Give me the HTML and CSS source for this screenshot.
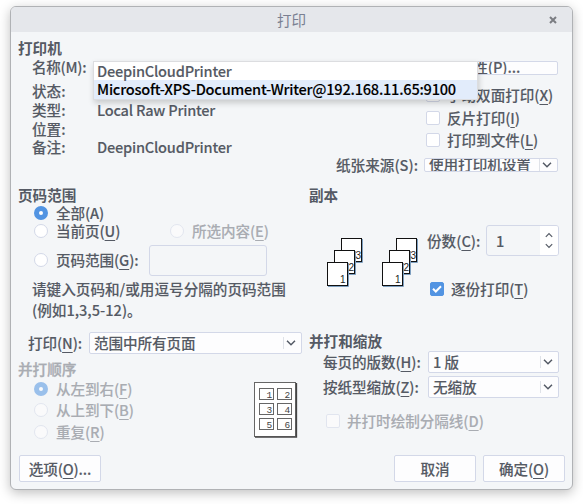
FILE: index.html
```html
<!DOCTYPE html>
<html lang="zh-CN">
<head>
<meta charset="utf-8">
<title>打印</title>
<link rel="stylesheet" href="styles.css">
</head>
<body>
<svg class="defs" width="0" height="0" aria-hidden="true">
  <symbol id="chev" viewBox="0 0 10 7"><path d="M1 1.2 5 5.2 9 1.2" fill="none" stroke="#555b66" stroke-width="1.5"/></symbol>
</svg>
<main class="dialog">
  <header class="titlebar"><span>打印</span>
    <svg class="close" width="8" height="8" viewBox="0 0 8 8"><path d="M1 1 7 7M7 1 1 7" stroke="#7b7d82" stroke-width="2"/></svg>
  </header>
  <section class="printer">
    <div class="info">
      <h2>打印机</h2>
      <dl>
        <dt class="name">名称(M):</dt><dd></dd>
        <dt>状态:</dt><dd></dd>
        <dt>类型:</dt><dd class="latin">Local Raw Printer</dd>
        <dt>位置:</dt><dd></dd>
        <dt>备注:</dt><dd class="latin">DeepinCloudPrinter</dd>
      </dl>
    </div>
    <div class="props">
      <button class="prop-btn"><span>属性(P)...</span></button>
      <label class="check"><i class="box"></i>手动双面打印(<u>X</u>)</label>
      <label class="check"><i class="box"></i>反片打印(<u>I</u>)</label>
      <label class="check"><i class="box"></i>打印到文件(<u>L</u>)</label>
      <div class="source"><span>纸张来源(S):</span><div class="combo short"><span>使用打印机设置</span><svg width="10" height="12"><use href="#chev"/></svg></div></div>
    </div>
    <ul class="popup latin"><li>DeepinCloudPrinter</li><li class="active">Microsoft-XPS-Document-Writer@192.168.11.65:9100</li></ul>
  </section>
  <section class="columns">
    <div class="left">
      <h2>页码范围</h2>
      <div class="radios">
        <label class="radio all"><i class="dot on"></i>全部(A)</label>
        <div class="pair"><label class="radio"><i class="dot"></i>当前页(<u>U</u>)</label><label class="radio off"><i class="dot"></i>所选内容(<u>E</u>)</label></div>
        <div class="range"><label class="radio"><i class="dot"></i>页码范围(<u>G</u>):</label><span class="field"></span></div>
      </div>
      <p class="hint">请键入页码和/或用逗号分隔的页码范围<br>(例如1,3,5-12)。</p>
      <div class="print-row"><span>打印(<u>N</u>):</span><div class="combo"><span>范围中所有页面</span><svg width="10" height="12"><use href="#chev"/></svg></div></div>
      <h2 class="off">并打顺序</h2>
      <div class="order">
        <div class="order-list off">
          <label class="radio"><i class="dot on"></i>从左到右(<u>F</u>)</label>
          <label class="radio"><i class="dot"></i>从上到下(<u>B</u>)</label>
          <label class="radio"><i class="dot"></i>重复(<u>R</u>)</label>
        </div>
        <svg class="sheet" width="44" height="56" viewBox="0 0 44 56">
          <rect x=".5" y=".5" width="41" height="54" fill="#fff" stroke="#666"/>
          <path d="M1 55.200H42.500V1" fill="none" stroke="#444" stroke-width="1.300"/>
          <g fill="#fff" stroke="#666"><rect x="5.500" y="6.500" width="14" height="11"/><rect x="23.500" y="6.500" width="14" height="11"/><rect x="5.500" y="21.500" width="14" height="11"/><rect x="23.500" y="21.500" width="14" height="11"/><rect x="5.500" y="36.500" width="14" height="11"/><rect x="23.500" y="36.500" width="14" height="11"/></g>
          <g class="cells"><text x="12.500" y="15.500">1</text><text x="30.500" y="15.500">2</text><text x="12.500" y="30.500">3</text><text x="30.500" y="30.500">4</text><text x="12.500" y="45.500">5</text><text x="30.500" y="45.500">6</text></g>
        </svg>
      </div>
    </div>
    <div class="right">
      <h2>副本</h2>
      <div class="copies">
        <svg class="stack" width="36" height="49" viewBox="0 0 36 49">
          <path d="M15 24.500H35.500V1M8 36.500H28.500V13M1 48.500H21.500V25" fill="none" stroke="#7d9fc0"/>
          <g fill="#fff" stroke="#111"><rect x="14.500" y=".5" width="20" height="23"/><path d="M28.500 13V36.500" stroke="#7d9fc0"/><rect x="7.500" y="12.500" width="20" height="23"/><path d="M21.500 25V48" stroke="#7d9fc0"/><rect x=".5" y="24.500" width="20" height="23"/></g>
          <g class="digits"><text x="28.500" y="20.500">3</text><text x="21.500" y="32.500">2</text><text x="13" y="44.500">1</text></g>
        </svg>
        <svg class="stack" width="36" height="49" viewBox="0 0 36 49">
          <path d="M15 24.500H35.500V1M8 36.500H28.500V13M1 48.500H21.500V25" fill="none" stroke="#7d9fc0"/>
          <g fill="#fff" stroke="#111"><rect x="14.500" y=".5" width="20" height="23"/><path d="M28.500 13V36.500" stroke="#7d9fc0"/><rect x="7.500" y="12.500" width="20" height="23"/><path d="M21.500 25V48" stroke="#7d9fc0"/><rect x=".5" y="24.500" width="20" height="23"/></g>
          <g class="digits"><text x="28.500" y="20.500">3</text><text x="21.500" y="32.500">2</text><text x="13" y="44.500">1</text></g>
        </svg>
        <div class="copy-opts">
          <div class="count"><span>份数(<u>C</u>):</span><div class="spin"><span>1</span><div class="arrows"><svg class="up" width="8" height="6"><use href="#chev"/></svg><svg width="8" height="6"><use href="#chev"/></svg></div></div></div>
          <label class="check collate"><i class="box on"><svg width="10" height="8" viewBox="0 0 10 8"><path d="M1 3.700 3.800 6.500 9 1.200" fill="none" stroke="#fff" stroke-width="2"/></svg></i>逐份打印(<u>T</u>)</label>
        </div>
      </div>
      <h2>并打和缩放</h2>
      <div class="scale"><span>每页的版数(<u>H</u>):</span><div class="combo"><span>1 版</span><svg width="10" height="12"><use href="#chev"/></svg></div></div>
      <div class="scale"><span>按纸型缩放(<u>Z</u>):</span><div class="combo"><span>无缩放</span><svg width="10" height="12"><use href="#chev"/></svg></div></div>
      <label class="check line off"><i class="box"></i>并打时绘制分隔线(<u>D</u>)</label>
    </div>
  </section>
  <footer><button class="options">选项(<u>O</u>)...</button><button>取消</button><button>确定(<u>O</u>)</button></footer>
</main>
</body>
</html>
```

FILE: styles.css
```css
* { box-sizing: border-box; }
body { margin: 0; padding: 6px 10px; width: 583px; height: 504px; overflow: hidden; background: #fff; color: #555a64; font: 500 14.6px/18px "Noto Sans CJK SC", sans-serif; -webkit-text-stroke: .1px; }
.defs { display: block; height: 0; }
h2, p, dl, dd, ul { margin: 0; padding: 0; }
h2 { font-size: 14.6px; line-height: 18px; height: 18px; font-weight: 700; -webkit-text-stroke: 0; }
h2.off { font-weight: 500; -webkit-text-stroke: .3px; }
u { text-decoration: underline; text-decoration-thickness: 1px; text-underline-offset: 3px; }
.latin { letter-spacing: -.235px; }
.dialog { width: 563px; height: 484px; border: 1px solid #b0b2b5; border-radius: 6px; background: #f4f6f8; box-shadow: 0 3px 12px rgba(0,0,0,.25); display: flex; flex-direction: column; }
.titlebar { height: 25px; flex: none; background: #e5e7eb; border-radius: 5px 5px 0 0; display: grid; grid-template-columns: 1fr auto 1fr; align-items: center; color: #7a8092; font-weight: 400; -webkit-text-stroke: 0; }
.titlebar span { grid-column: 2; }
.close { justify-self: end; margin-right: 15px; }
.off { color: #a9acb2; }
.printer { position: relative; display: flex; height: 154px; padding: 7px 14px 0 7px; }
.info { width: 319px; }
dl { display: grid; grid-template-columns: 65px 1fr; grid-template-rows: 24px 19px 19px 18px 18px; margin: 1px 0 0 14px; }
dt, dd { line-height: 18px; white-space: nowrap; }
.name { letter-spacing: -.3px; }
.props { flex: 1; padding-top: 22px; display: flex; flex-direction: column; }
button { font: inherit; color: inherit; background: #fdfdfe; border: 1px solid #d3d8e8; border-radius: 2px; padding: 0; }
.prop-btn { align-self: flex-end; width: 131px; height: 14px; overflow: hidden; line-height: 12px; margin-bottom: 9px; display: flex; align-items: center; justify-content: center; }
.prop-btn span { margin: -2px 0 0 -6px; letter-spacing: -.1px; }
.check { display: flex; align-items: center; height: 22.500px; white-space: nowrap; letter-spacing: -.05px; }
.box { width: 14px; height: 14px; border: 1px solid #d3d8e8; border-radius: 2px; background: #fff; margin-right: 7px; display: flex; align-items: center; justify-content: center; flex: none; }
.box.on { background: #5294e2; border-color: #5294e2; }
.props .check { margin-left: 90px; }
.props .check { position: static; }
.source { display: flex; align-items: center; justify-content: flex-end; height: 14px; margin-top: 6px; white-space: nowrap; }
.source > span { margin-right: 6px; }
.combo { height: 22px; border: 1px solid #d3d8e8; border-radius: 2px; background: #fdfdfe; display: flex; align-items: center; justify-content: space-between; padding: 0 5px 0 4px; overflow: hidden; white-space: nowrap; }
.combo svg { box-sizing: content-box; padding-left: 2px; border-left: 1px solid #dfe2e8; flex: none; }
.short { width: 134px; height: 14px; }
.short span { margin-top: -2px; letter-spacing: -.05px; }
.popup { position: absolute; left: 82px; top: 29px; width: 385px; height: 39px; border: 1px solid #dcdde0; list-style: none; background: #fff; box-shadow: 1px 3px 6px rgba(0,0,0,.18); }
.popup li { height: 18px; line-height: 18px; padding-left: 3px; white-space: nowrap; }
.popup .active { height: 19px; background: #e2ecfb; color: #000; }
.columns { display: grid; grid-template-columns: 291px 1fr; height: 262px; }
.left { padding-left: 7px; }
.radios { padding-left: 16px; }
.radio { display: flex; align-items: center; height: 18px; white-space: nowrap; letter-spacing: -.1px; }
.dot { width: 14px; height: 14px; border: 1px solid #d3d8e8; border-radius: 50%; background: #fff; margin-right: 8px; flex: none; }
.dot.on { border: 5px solid #5294e2; }
.off .dot, .off .box { opacity: .55; }
.pair { display: grid; grid-template-columns: 136px 1fr; }
.range { display: grid; grid-template-columns: 115px 118px; align-items: center; height: 31px; margin-top: 5px; }
.range .radio { margin-top: -2px; }
.field { height: 31px; border: 1px solid #d3d8e8; border-radius: 3px; }
.hint { line-height: 21px; padding: 2px 0 0 14px; white-space: nowrap; }
.print-row { display: grid; grid-template-columns: 61px 213px; padding-left: 10px; margin: 12px 0 6px; align-items: center; letter-spacing: -.1px; }
.order { display: flex; justify-content: space-between; padding: 0 4px 0 16px; }
.order-list { display: grid; grid-auto-rows: 21.500px; align-content: start; align-items: center; }
.sheet { margin-top: 4px; }
.right { padding-left: 7px; }
.copies { display: flex; height: 128px; padding: 21px 0 0 18px; }
.stack { margin: 13px 19px 0 0; flex: none; }
.copy-opts { margin-left: -10px; }
.count { display: grid; grid-template-columns: 59px 73px; align-items: center; white-space: nowrap; }
.spin { height: 31px; border: 1px solid #d3d8e8; border-radius: 3px; display: flex; align-items: center; justify-content: space-between; padding-left: 9px; }
.arrows { height: 29px; width: 18px; background: #fff; border-radius: 0 2px 2px 0; display: flex; flex-direction: column; align-items: center; justify-content: space-evenly; }
.up { transform: rotate(180deg); }
.collate { margin: 22px 0 0 3px; }
.scale { display: grid; grid-template-columns: 105px 131px; align-items: center; height: 22px; margin: 1px 0 3px 14px; white-space: nowrap; letter-spacing: -.1px; }
.line { margin: 12px 0 0 17px; }
footer { display: flex; padding: 7px 7px 0 8px; }
footer button { width: 82px; height: 27px; margin-left: 7px; line-height: 22px; letter-spacing: -.15px; }
footer .options { margin: 0 auto 0 0; }
text { fill: #222; font-family: "Liberation Sans", sans-serif; -webkit-text-stroke: 0; }
.digits text { font-size: 10px; }
.cells text { font-family: "Liberation Mono", monospace; font-size: 9.5px; fill: #444; }
```
